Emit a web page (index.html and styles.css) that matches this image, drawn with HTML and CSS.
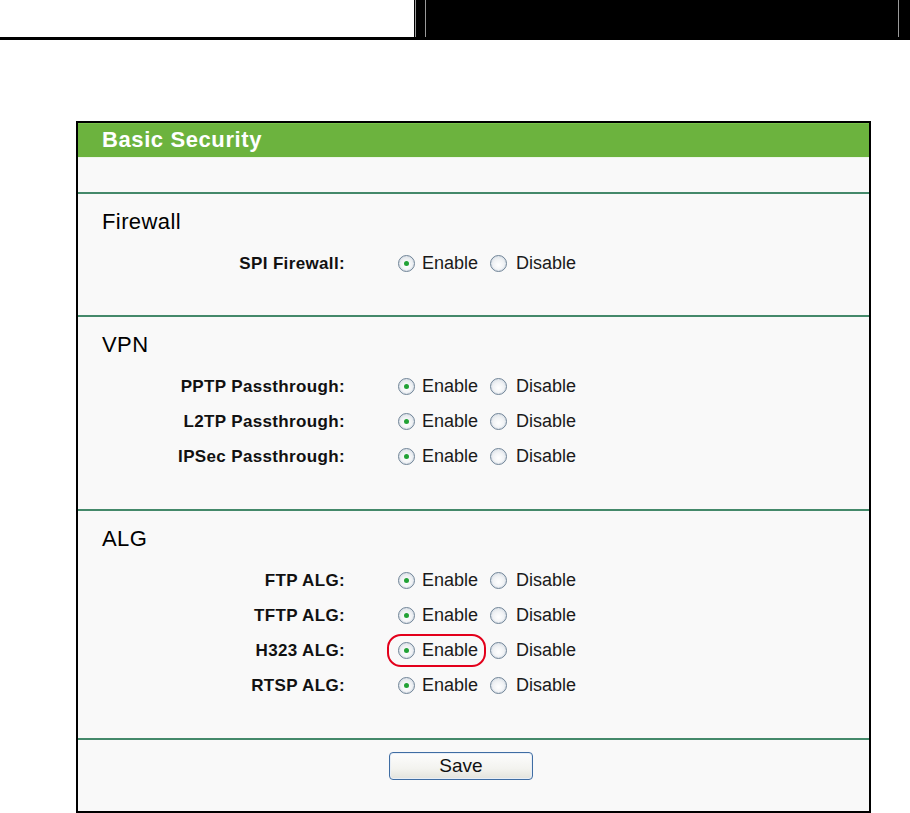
FILE: index.html
```html
<!DOCTYPE html>
<html lang="en">
<head>
<meta charset="utf-8">
<title>Basic Security</title>
<link rel="stylesheet" href="styles.css">
</head>
<body>
<div class="topbar">
  <div class="topbar-left"></div>
  <div class="topbar-right">
    <div class="rule-outer">
      <div class="rule-inner"></div>
    </div>
  </div>
</div>

<div class="panel">
  <div class="panel-title">Basic Security</div>
  <div class="panel-band"></div>

  <section class="section section-first">
    <h2 class="section-title">Firewall</h2>
    <div class="row">
      <div class="label">SPI Firewall:</div>
      <div class="options">
        <span class="radio checked"></span><span class="opt-text">Enable</span>
        <span class="radio"></span><span class="opt-text">Disable</span>
      </div>
    </div>
  </section>

  <section class="section">
    <h2 class="section-title">VPN</h2>
    <div class="row">
      <div class="label">PPTP Passthrough:</div>
      <div class="options">
        <span class="radio checked"></span><span class="opt-text">Enable</span>
        <span class="radio"></span><span class="opt-text">Disable</span>
      </div>
    </div>
    <div class="row">
      <div class="label">L2TP Passthrough:</div>
      <div class="options">
        <span class="radio checked"></span><span class="opt-text">Enable</span>
        <span class="radio"></span><span class="opt-text">Disable</span>
      </div>
    </div>
    <div class="row">
      <div class="label">IPSec Passthrough:</div>
      <div class="options">
        <span class="radio checked"></span><span class="opt-text">Enable</span>
        <span class="radio"></span><span class="opt-text">Disable</span>
      </div>
    </div>
  </section>

  <section class="section">
    <h2 class="section-title">ALG</h2>
    <div class="row">
      <div class="label">FTP ALG:</div>
      <div class="options">
        <span class="radio checked"></span><span class="opt-text">Enable</span>
        <span class="radio"></span><span class="opt-text">Disable</span>
      </div>
    </div>
    <div class="row">
      <div class="label">TFTP ALG:</div>
      <div class="options">
        <span class="radio checked"></span><span class="opt-text">Enable</span>
        <span class="radio"></span><span class="opt-text">Disable</span>
      </div>
    </div>
    <div class="row">
      <div class="label">H323 ALG:</div>
      <div class="options highlighted">
        <span class="highlight"></span>
        <span class="radio checked"></span><span class="opt-text">Enable</span>
        <span class="radio"></span><span class="opt-text">Disable</span>
      </div>
    </div>
    <div class="row">
      <div class="label">RTSP ALG:</div>
      <div class="options">
        <span class="radio checked"></span><span class="opt-text">Enable</span>
        <span class="radio"></span><span class="opt-text">Disable</span>
      </div>
    </div>
  </section>

  <section class="section save-section">
    <button class="save-btn" type="button">Save</button>
  </section>
</div>
</body>
</html>
```

FILE: styles.css
```css
* { box-sizing: border-box; }

html, body {
  margin: 0;
  padding: 0;
  background: #ffffff;
}

body {
  font-family: Arial, "Liberation Sans", sans-serif;
  color: #111;
  height: 813px;
  overflow: hidden;
}

/* top page strip */
.topbar {
  display: flex;
  height: 40px;
}
.topbar-left {
  flex: 0 0 414px;
  border-bottom: 3px solid #000;
}
.topbar-right {
  flex: 1 1 auto;
  background: #000;
  padding-left: 1px;
}
.rule-outer {
  height: 37px;
  border-left: 1px solid #9a9a9a;
}
.rule-inner {
  height: 37px;
  margin-left: 9px;
  margin-right: 11px;
  border-left: 1px solid #9a9a9a;
  border-right: 1px solid #9a9a9a;
}

/* panel */
.panel {
  margin: 81px 0 0 76px;
  width: 795px;
  border: 2px solid #000;
  background: #f9f9f9;
}
.panel-title {
  height: 34px;
  background: #6cb33e;
  border-top: 1px solid #78c24a;
  color: #fff;
  font-weight: bold;
  font-size: 22px;
  letter-spacing: 0.6px;
  line-height: 32px;
  padding-left: 24px;
}
.panel-band {
  height: 35px;
  border-top: 1px solid #eef6ea;
}

.section {
  border-top: 2px solid #44896a;
  padding-bottom: 35px;
}
.section-first {
  padding-bottom: 34px;
}
.section-title {
  margin: 0 0 11px 0;
  padding: 15px 0 0 24px;
  font-size: 22px;
  font-weight: normal;
  letter-spacing: 0.4px;
  line-height: 26px;
  color: #000;
}

.row {
  display: flex;
  align-items: center;
  height: 35px;
}
.label {
  flex: 0 0 267px;
  text-align: right;
  font-weight: bold;
  font-size: 17px;
  letter-spacing: 0.35px;
  color: #111;
}
.options {
  position: relative;
  display: flex;
  align-items: center;
  margin-left: 53px;
  height: 35px;
  font-size: 18px;
  color: #1a1a1a;
}
.opt-text {
  margin-left: 7px;
  margin-right: 12px;
}
.radio + .opt-text + .radio + .opt-text {
  margin-left: 9px;
}

.radio {
  display: inline-block;
  width: 17px;
  height: 17px;
  border-radius: 50%;
  border: 1.5px solid #6f8396;
  background: radial-gradient(circle at 50% 60%, #ffffff 0%, #f1f3f5 45%, #d3d9e0 100%);
  box-shadow: inset 0 0 0 1px #dfe5ec;
  position: relative;
  flex: 0 0 17px;
}
.radio.checked::after {
  content: "";
  position: absolute;
  left: 4.5px;
  top: 4.5px;
  width: 5px;
  height: 5px;
  border-radius: 50%;
  background: #22a236;
}

.highlight {
  position: absolute;
  left: -11px;
  top: 1px;
  width: 99px;
  height: 33px;
  border: 2.5px solid #e3001b;
  border-radius: 14px;
  pointer-events: none;
}

.save-section {
  padding: 12px 0 31px 311px;
}
.save-btn {
  display: block;
  width: 144px;
  height: 28px;
  padding: 0;
  border: 1px solid #3f6da3;
  border-radius: 4px;
  background: linear-gradient(#fdfdfd 0%, #f3f3ef 60%, #e3e3dc 100%);
  box-shadow: inset 0 0 0 1px #e8eef6;
  font-family: Arial, "Liberation Sans", sans-serif;
  font-size: 19px;
  color: #111;
  line-height: 24px;
}
```
